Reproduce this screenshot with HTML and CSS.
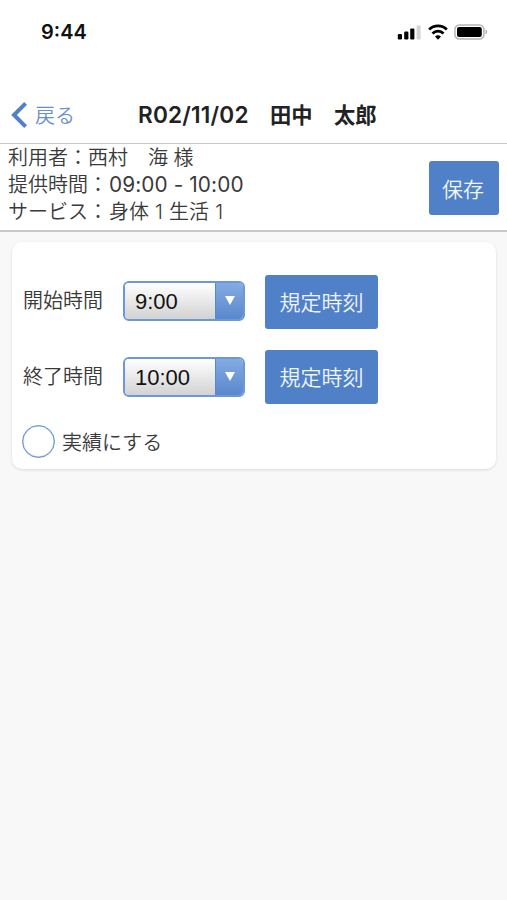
FILE: index.html
```html
<!DOCTYPE html>
<html lang="ja">
<head>
    <meta charset="UTF-8">
    <meta name="viewport" content="width=device-width, initial-scale=1.0">
    <title>R02/11/02　田中　太郎</title>
    <link rel="stylesheet" href="styles.css">
</head>
<body>
    <div class="status-bar">
        <span class="clock">9:44</span>
        <div class="status-icons">
            <svg class="signal" width="24" height="16" viewBox="0 0 24 16">
                <rect x="0.8" y="10" width="4.2" height="5.5" rx="1.2"/>
                <rect x="7.2" y="7.6" width="4.2" height="7.9" rx="1.2"/>
                <rect x="13.2" y="4.4" width="4.2" height="11.1" rx="1.2"/>
                <rect class="off" x="19.6" y="1.4" width="4" height="14.1" rx="1.2"/>
            </svg>
            <svg class="wifi" width="20" height="16" viewBox="0 0 20 16">
                <path d="M1.2 5.5a12.4 12.4 0 0 1 17.6 0"/>
                <path d="M4.5 9.4a7.7 7.7 0 0 1 11 0"/>
                <path class="dot" d="M7 12.6a4.4 4.4 0 0 1 6 0L10 15.7z"/>
            </svg>
            <svg class="battery" width="34" height="16" viewBox="0 0 34 16">
                <rect class="shell" x="0.9" y="0.9" width="29" height="14.2" rx="4.5"/>
                <rect x="3" y="3" width="24.8" height="10" rx="2"/>
                <path class="cap" d="M31.4 5.6c2.4 1 2.4 3.8 0 4.8z"/>
            </svg>
        </div>
    </div>

    <header class="nav-bar">
        <a class="back">
            <svg width="17" height="28" viewBox="0 0 17 28">
                <path d="M14.6 2.4L3 14l11.6 11.6"/>
            </svg>
            <span>戻る</span>
        </a>
        <h1><span class="date">R02/11/02</span>　田中　太郎</h1>
    </header>

    <section class="info">
        <div class="info-text">
            <p>利用者：西村　海 様</p>
            <p>提供時間：<span class="time">09:00 - 10:00</span></p>
            <p>サービス：<span class="service">身体 1 生活 1</span></p>
        </div>
        <button class="btn btn-save">保存</button>
    </section>

    <main>
        <div class="card">
            <div class="row">
                <label for="start">開始時間</label>
                <div class="select-box">
                    <select id="start"><option>9:00</option></select>
                    <span class="arrow"></span>
                </div>
                <button class="btn">規定時刻</button>
            </div>
            <div class="row row-end">
                <label for="end">終了時間</label>
                <div class="select-box">
                    <select id="end"><option>10:00</option></select>
                    <span class="arrow"></span>
                </div>
                <button class="btn">規定時刻</button>
            </div>
            <label class="check">
                <input type="checkbox">
                <span>実績にする</span>
            </label>
        </div>
    </main>
</body>
</html>
```
FILE: styles.css
```css
:root {
    --blue: #5081c8;
    --text-color: #3a3a3a;
    --line-color: #c8c8c8;
}

* {
    margin: 0;
    padding: 0;
    box-sizing: border-box;
}

body {
    min-height: 100vh;
    background-color: #f8f8f8;
    color: var(--text-color);
    font-family: Inter, "Noto Sans CJK JP", sans-serif;
    font-size: 20px;
    font-weight: 350;
}

.status-bar {
    display: flex;
    justify-content: space-between;
    height: 86px;
    padding: 20px 19px 0 41px;
    background-color: #fff;
}

.clock {
    color: #111;
    font-size: 20px;
    font-weight: 600;
    line-height: 24px;
}

.status-icons {
    display: flex;
    gap: 7px;
    height: 16px;
    margin-top: 4px;
}

.signal .off {
    fill: #d4d4d4;
}

.wifi {
    fill: none;
    stroke: #000;
    stroke-width: 2.8;
}

.wifi .dot {
    fill: #000;
    stroke: none;
}

.battery {
    margin-left: -1px;
}

.battery .shell {
    fill: none;
    stroke: #b4b4b4;
    stroke-width: 1.5;
}

.battery .cap {
    fill: #b4b4b4;
}

.nav-bar {
    display: grid;
    grid-template-columns: 127px 1fr;
    align-items: center;
    height: 58px;
    padding-left: 11px;
    background-color: #fff;
    border-bottom: 1px solid var(--line-color);
}

.back {
    display: flex;
    align-items: center;
    gap: 7px;
    color: #6790cc;
}

.back svg {
    fill: none;
    stroke: var(--blue);
    stroke-width: 4;
}

h1 {
    color: #222;
    font-size: 21.3px;
    font-weight: 600;
    line-height: 28px;
    white-space: nowrap;
}

.date {
    font-size: 22.6px;
    letter-spacing: 0.2px;
}

.info {
    display: flex;
    justify-content: space-between;
    align-items: center;
    height: 88px;
    padding: 0 8px;
    background-color: #fff;
    border-bottom: 2px solid var(--line-color);
}

.info-text {
    line-height: 27px;
    margin-top: -3px;
}

.time {
    margin-left: 1px;
    font-size: 20.8px;
    font-weight: 400;
    line-height: 1;
    letter-spacing: 0.1px;
}

.service {
    margin-left: 1px;
    word-spacing: 0.5px;
}

.btn {
    width: 113px;
    height: 54px;
    padding-bottom: 2px;
    border: none;
    border-radius: 3px;
    background-color: var(--blue);
    color: #f0f5ff;
    font: inherit;
    font-size: 21px;
}

.btn-save {
    width: 70px;
    margin-top: 2px;
    padding: 0 2px 1px 0;
}

main {
    padding: 10px 11px 0 12px;
}

.card {
    display: flex;
    flex-direction: column;
    gap: 21px;
    height: 227px;
    padding: 33px 11px 0;
    border-radius: 10px;
    background-color: #fff;
    box-shadow: 0 1px 3px rgba(0, 0, 0, 0.12);
}

.row {
    display: grid;
    grid-template-columns: 80px 122px 113px;
    column-gap: 20px;
    align-items: center;
    height: 54px;
}

.row label {
    padding-bottom: 5px;
}

.select-box {
    display: flex;
    height: 40px;
    margin-bottom: 2px;
    border: 2px solid #6a98d8;
    border-radius: 6px;
    overflow: hidden;
}

.row-end label {
    padding-bottom: 3px;
}

.row-end .select-box {
    margin-bottom: 0;
}

select {
    flex: 1;
    min-width: 0;
    padding: 1px 0 0 10px;
    border: none;
    appearance: none;
    background: linear-gradient(#fff, #d2d2d2);
    color: #111;
    font-family: "Liberation Sans", Arial, sans-serif;
    font-size: 22px;
}

.arrow {
    display: flex;
    justify-content: center;
    width: 28px;
    padding-top: 13px;
    border-left: 1px solid #5a88c8;
    background: linear-gradient(#84abe2, #5a88cd);
}

.arrow::before {
    content: "";
    height: 0;
    border: 5px solid transparent;
    border-top: 9px solid #fff;
    border-bottom: none;
}

.check {
    display: flex;
    align-items: center;
    gap: 7px;
    margin-left: -1px;
}

.check input {
    width: 33px;
    height: 33px;
    border: 1.5px solid #5b8ed8;
    border-radius: 50%;
    appearance: none;
    background-color: #fff;
    box-shadow: inset 0 0 0 0.5px #8fb3e6;
}
```
